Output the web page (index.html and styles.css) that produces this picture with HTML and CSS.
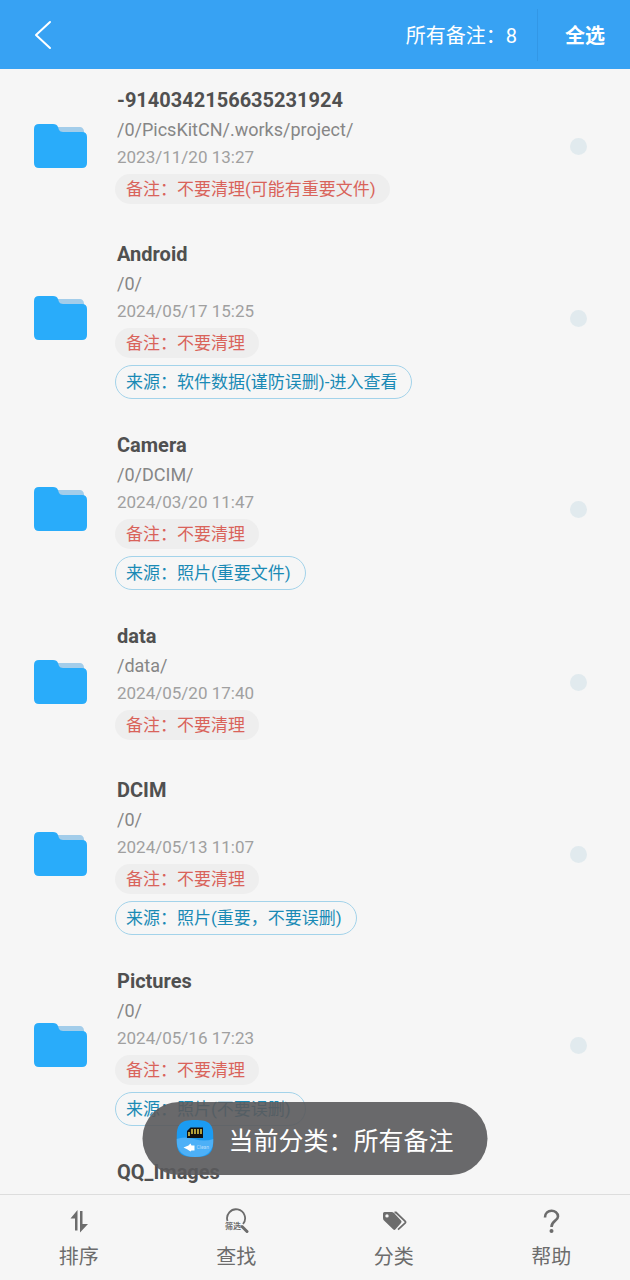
FILE: index.html
```html
<!DOCTYPE html>
<html lang="zh-CN">
<head>
    <meta charset="UTF-8">
    <meta name="viewport" content="width=device-width, initial-scale=1.0">
    <title>所有备注</title>
    <link rel="stylesheet" href="styles.css">
</head>
<body>
    <!-- 公用图标 -->
    <svg class="sprite" aria-hidden="true">
        <symbol id="folder" viewBox="0 0 53 45">
            <path d="M22 3h24q3 0 4 4v10H22z" fill="#a3cdea"/>
            <path d="M5 0h14q4 0 5 3l1 3q1 2 4 2h19q5 0 5 5v26q0 5-5 5H5q-5 0-5-5V5q0-5 5-5z" fill="#29acfa"/>
        </symbol>
    </svg>

    <header class="header">
        <button class="back" type="button" aria-label="返回">
            <svg width="18" height="30" viewBox="0 0 18 30"><path d="M16 2L2 15l14 13" fill="none" stroke="#fff" stroke-width="2" stroke-linecap="round" stroke-linejoin="round"/></svg>
        </button>
        <span class="total">所有备注：8</span>
        <button class="select-all" type="button">全选</button>
    </header>

    <main class="list">
        <label class="item">
            <svg class="folder"><use href="#folder"/></svg>
            <div class="info">
                <h2 class="name">-9140342156635231924</h2>
                <p class="path">/0/PicsKitCN/.works/project/</p>
                <p class="date">2023/11/20 13:27</p>
                <span class="note">备注：不要清理(可能有重要文件)</span>
            </div>
            <input class="check" type="checkbox">
        </label>
        <label class="item">
            <svg class="folder"><use href="#folder"/></svg>
            <div class="info">
                <h2 class="name">Android</h2>
                <p class="path">/0/</p>
                <p class="date">2024/05/17 15:25</p>
                <span class="note">备注：不要清理</span>
                <span class="source">来源：软件数据(谨防误删)-进入查看</span>
            </div>
            <input class="check" type="checkbox">
        </label>
        <label class="item">
            <svg class="folder"><use href="#folder"/></svg>
            <div class="info">
                <h2 class="name">Camera</h2>
                <p class="path">/0/DCIM/</p>
                <p class="date">2024/03/20 11:47</p>
                <span class="note">备注：不要清理</span>
                <span class="source">来源：照片(重要文件)</span>
            </div>
            <input class="check" type="checkbox">
        </label>
        <label class="item">
            <svg class="folder"><use href="#folder"/></svg>
            <div class="info">
                <h2 class="name">data</h2>
                <p class="path">/data/</p>
                <p class="date">2024/05/20 17:40</p>
                <span class="note">备注：不要清理</span>
            </div>
            <input class="check" type="checkbox">
        </label>
        <label class="item">
            <svg class="folder"><use href="#folder"/></svg>
            <div class="info">
                <h2 class="name">DCIM</h2>
                <p class="path">/0/</p>
                <p class="date">2024/05/13 11:07</p>
                <span class="note">备注：不要清理</span>
                <span class="source">来源：照片(重要，不要误删)</span>
            </div>
            <input class="check" type="checkbox">
        </label>
        <label class="item">
            <svg class="folder"><use href="#folder"/></svg>
            <div class="info">
                <h2 class="name">Pictures</h2>
                <p class="path">/0/</p>
                <p class="date">2024/05/16 17:23</p>
                <span class="note">备注：不要清理</span>
                <span class="source">来源：照片(不要误删)</span>
            </div>
            <input class="check" type="checkbox">
        </label>
        <label class="item">
            <svg class="folder"><use href="#folder"/></svg>
            <div class="info">
                <h2 class="name">QQ_Images</h2>
            </div>
            <input class="check" type="checkbox">
        </label>
    </main>

    <nav class="tabs">
        <button class="tab" type="button">
            <svg class="tab-icon" viewBox="0 0 26 26" fill="#6c6c6c">
                <path d="M11.500 2v20.500H9V10.500H4.500zM14 3h2.500v13H22L14 24.500z"/>
            </svg>
            排序
        </button>
        <button class="tab" type="button">
            <svg class="tab-icon" viewBox="0 0 26 26">
                <path d="M4.500 13A9 9 0 1 1 20 16" fill="none" stroke="#6c6c6c" stroke-width="1.800"/>
                <path d="M19 18.500l5 5" stroke="#6c6c6c" stroke-width="3" stroke-linecap="round"/>
                <text class="tab-mini" x="2" y="21">筛选</text>
            </svg>
            查找
        </button>
        <button class="tab" type="button">
            <svg class="tab-icon" viewBox="0 0 26 26">
                <path fill="#6c6c6c" fill-rule="evenodd" d="M3.500 4h7q1.500 0 2.500 1l7 7.500q1.200 1.200 0 2.400L14.500 21.300q-1.200 1.200-2.400 0L3 12.500q-1-1-1-2.500V5.500q0-1.500 1.500-1.500zM6 6.200a1.700 1.700 0 1 0 0 3.400a1.700 1.700 0 1 0 0-3.400z"/>
                <path d="M13.500 4.500h1.500l9 8.700q1 1 0 2l-7 6.500" fill="none" stroke="#6c6c6c" stroke-width="1.800"/>
            </svg>
            分类
        </button>
        <button class="tab" type="button">
            <svg class="tab-icon" viewBox="0 0 26 26">
                <path d="M7 9.500C7 0.500 20 1 20 8.500C20 13 13.500 12.500 13.500 19" fill="none" stroke="#6c6c6c" stroke-width="2.600"/>
                <circle cx="13.500" cy="23" r="2" fill="#6c6c6c"/>
            </svg>
            帮助
        </button>
    </nav>

    <div class="toast" role="status">
        <svg class="toast-icon" viewBox="0 0 37 37">
            <path d="M18.500 0C33 0 37 4 37 18.500S33 37 18.500 37 0 33 0 18.500 4 0 18.500 0z" fill="#1b9bf2"/>
            <path d="M0 19q8-3 18 0t19 0Q37 37 18.500 37T0 19z" fill="#4db0f7"/>
            <path d="M14 7.500h12.500V18H10.500v-7z" fill="#111"/>
            <path d="M12.500 12v4M15.500 9v5M18.500 9v5M21.500 9v5M24.500 9v5" stroke="#e8cf4a" stroke-width="1.500"/>
            <path d="M7 27.500l5-2 2-2 1 2h3v5h-3l-1 1-3-2z" fill="#fff"/>
            <text class="toast-mini" x="20" y="29">Clean</text>
        </svg>
        <span>当前分类：所有备注</span>
    </div>
</body>
</html>
```
FILE: styles.css
```css
* {
    box-sizing: border-box;
}

body {
    position: relative;
    display: flex;
    flex-direction: column;
    height: 100vh;
    margin: 0;
    overflow: hidden;
    background: #f6f6f6;
    font-family: Roboto, "Noto Sans CJK SC", sans-serif;
}

button {
    padding: 0;
    border: none;
    background: none;
    font-family: inherit;
    cursor: pointer;
}

.sprite {
    position: absolute;
    width: 0;
    height: 0;
}

/* 顶部栏 */
.header {
    display: flex;
    align-items: center;
    flex-shrink: 0;
    height: 69px;
    padding: 0 0 0 34px;
    background: #37a2f3;
    color: #fff;
}

.back {
    display: flex;
}

.total {
    margin-left: auto;
    padding-right: 20px;
    font-size: 20px;
}

.select-all {
    height: 52px;
    padding: 0 25px 0 27px;
    border-left: 1px solid #3297e6;
    color: #fff;
    font-size: 20px;
    font-weight: 700;
}

/* 文件列表 */
.list {
    flex: 1;
    min-height: 0;
    overflow: hidden;
}

.item {
    display: flex;
    align-items: center;
    min-height: 154px;
    padding: 0 43px 0 34px;
}

.folder {
    flex-shrink: 0;
    width: 53px;
    height: 45px;
    margin-right: 28px;
}

.info {
    display: flex;
    flex: 1;
    flex-direction: column;
    align-items: flex-start;
    align-self: flex-start;
    min-width: 0;
    padding: 16px 0 15px;
}

.name,
.path,
.date {
    margin: 0;
    padding-left: 2px;
}

.name {
    color: #505050;
    font-size: 20px;
    font-weight: 700;
    line-height: 30px;
}

.path {
    color: #868686;
    font-size: 18px;
    line-height: 30px;
}

.date {
    color: #a0a0a0;
    font-size: 17px;
    line-height: 25px;
}

.note,
.source {
    border-radius: 17px;
    font-size: 17px;
}

.note {
    margin: 4px 0;
    padding: 0 14px 0 11px;
    background: #eee;
    color: #d9635a;
    line-height: 30px;
}

.source {
    margin-top: 3px;
    padding: 0 14px 0 10px;
    border: 1px solid #a3d3ea;
    color: #1a8ab5;
    line-height: 32px;
}

.check {
    flex-shrink: 0;
    width: 17px;
    height: 17px;
    margin: 0;
    border-radius: 50%;
    background: #e1eaee;
    appearance: none;
}

.check:checked {
    background: #37a2f3;
}

/* 底部菜单 */
.tabs {
    display: flex;
    flex-shrink: 0;
    height: 86px;
    border-top: 1px solid #ddd;
    background: #f6f6f6;
}

.tab {
    display: flex;
    flex: 1;
    flex-direction: column;
    align-items: center;
    padding-top: 13px;
    color: #6c6c6c;
    font-size: 20px;
    line-height: 30px;
    gap: 8px;
}

.tab-icon {
    width: 26px;
    height: 26px;
}

.tab-mini {
    fill: #6c6c6c;
    font-size: 8px;
    font-weight: 700;
}

/* 提示 */
.toast {
    position: absolute;
    bottom: 105px;
    left: 50%;
    display: flex;
    align-items: center;
    gap: 15px;
    height: 73px;
    padding: 0 34px;
    border-radius: 37px;
    background: rgba(90, 90, 92, 0.91);
    color: #fff;
    font-size: 25px;
    white-space: nowrap;
    transform: translateX(-50%);
}

.toast-icon {
    width: 37px;
    height: 37px;
}

.toast-mini {
    fill: #b5dcfa;
    font-size: 5px;
}
```
